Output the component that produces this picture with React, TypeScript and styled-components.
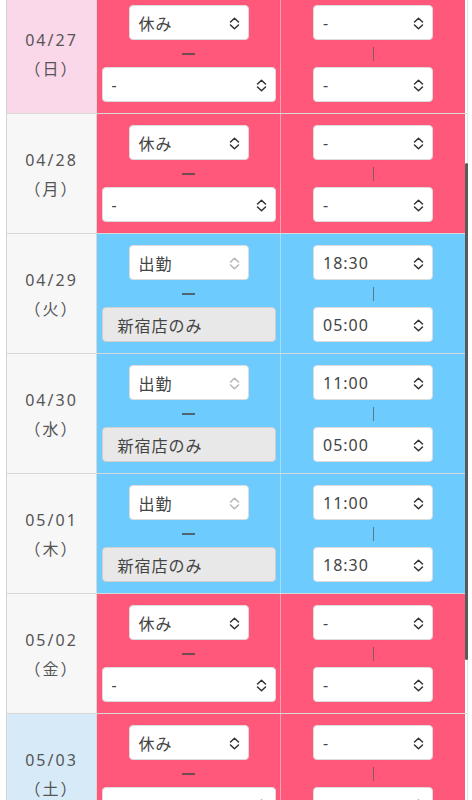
import styled, { createGlobalStyle } from "styled-components";

type Kind = "sun" | "sat" | "day";

interface Shift {
    date: string;
    dow: string;
    kind: Kind;
    work: boolean;
    start: string;
    end: string;
}

const shifts: Shift[] = [
    { date: "04/27", dow: "日", kind: "sun", work: false, start: "-", end: "-" },
    { date: "04/28", dow: "月", kind: "day", work: false, start: "-", end: "-" },
    { date: "04/29", dow: "火", kind: "day", work: true, start: "18:30", end: "05:00" },
    { date: "04/30", dow: "水", kind: "day", work: true, start: "11:00", end: "05:00" },
    { date: "05/01", dow: "木", kind: "day", work: true, start: "11:00", end: "18:30" },
    { date: "05/02", dow: "金", kind: "day", work: false, start: "-", end: "-" },
    { date: "05/03", dow: "土", kind: "sat", work: false, start: "-", end: "-" },
];

const GlobalStyle = createGlobalStyle`
    html, body {
        margin: 0;
        padding: 0;
        background: #fff;
        overflow: hidden;
    }
    body {
        font-family: "Noto Sans", "Noto Sans CJK JP", sans-serif;
    }
`;

const Page = styled.div`
    position: relative;
    height: 800px;
    overflow: hidden;
    padding-left: 6px;
`;

const Table = styled.div`
    width: 460px;
    margin-top: -6px;
    border-left: 1px solid #d4d4d4;
    border-right: 1px solid #e4e4e4;
`;

const Row = styled.div`
    display: grid;
    grid-template-columns: 90px 184px 184px;
    height: 119px;
    border-bottom: 1px solid #d8d8d8;
`;

const dateBg: Record<Kind, string> = {
    sun: "#fbd7ea",
    sat: "#d7eaf8",
    day: "#f7f7f7",
};

const DateCell = styled.div<{ $kind: Kind }>`
    background: ${(p) => dateBg[p.$kind]};
    border-right: 1px solid #d8d8d8;
    display: flex;
    flex-direction: column;
    align-items: center;
    justify-content: center;
    gap: 5px;
    padding-top: 2px;
    color: #555;
    font-size: 16px;
    letter-spacing: 2px;
    line-height: 24px;
`;

const Cell = styled.div<{ $work: boolean }>`
    background: ${(p) => (p.$work ? "#6dcbfd" : "#ff587b")};
    border-right: 1px solid ${(p) => (p.$work ? "#a9d9f3" : "#f2a3b4")};
    display: flex;
    flex-direction: column;
    align-items: center;
    justify-content: space-between;
    padding: 11px 5px;
    &:last-child {
        border-right: none;
    }
`;

const Select = styled.div<{ $wide?: boolean }>`
    position: relative;
    box-sizing: border-box;
    width: ${(p) => (p.$wide ? "174px" : "120px")};
    height: 35px;
    background: #fff;
    border: 1px solid #dcdcdc;
    border-radius: 4px;
    display: flex;
    align-items: center;
    padding: 0 9px;
    color: #444;
    font-size: 16px;
    letter-spacing: 1px;
`;

const Arrow = styled.svg<{ $muted?: boolean }>`
    position: absolute;
    right: 8px;
    top: 11px;
    width: 11px;
    height: 13px;
    stroke: ${(p) => (p.$muted ? "#b5b5b5" : "#333")};
`;

const StoreBox = styled.div`
    box-sizing: border-box;
    width: 174px;
    height: 35px;
    background: #e8e8e8;
    border: 1px solid #cfcfcf;
    border-radius: 4px;
    display: flex;
    align-items: center;
    padding-left: 15px;
    color: #444;
    font-size: 16px;
    letter-spacing: 1px;
`;

const Dash = styled.div`
    width: 13px;
    height: 2px;
    background: #444;
    opacity: 0.75;
`;

const Bar = styled.div`
    width: 1px;
    height: 14px;
    background: #555;
    opacity: 0.7;
`;

const ScrollThumb = styled.div`
    position: absolute;
    left: 465px;
    top: 163px;
    width: 3px;
    height: 497px;
    border-radius: 2px;
    background: #5a5a5a;
`;

function SelectBox(props: { value: string; wide?: boolean; disabled?: boolean }) {
    return (
        <Select $wide={props.wide}>
            {props.value}
            <Arrow $muted={props.disabled} viewBox="0 0 11 13" fill="none" strokeWidth="1.5" strokeLinecap="round" strokeLinejoin="round">
                <path d="M1.5 5 5.5 1.2 9.5 5" />
                <path d="M1.5 8 5.5 11.8 9.5 8" />
            </Arrow>
        </Select>
    );
}

export default function App() {
    return (
        <Page>
            <GlobalStyle />
            <Table>
                {shifts.map((s) => (
                    <Row key={s.date}>
                        <DateCell $kind={s.kind}>
                            <span>{s.date}</span>
                            <span>（{s.dow}）</span>
                        </DateCell>
                        <Cell $work={s.work}>
                            <SelectBox value={s.work ? "出勤" : "休み"} disabled={s.work} />
                            <Dash />
                            {s.work ? <StoreBox>新宿店のみ</StoreBox> : <SelectBox value="-" wide />}
                        </Cell>
                        <Cell $work={s.work}>
                            <SelectBox value={s.start} />
                            <Bar />
                            <SelectBox value={s.end} />
                        </Cell>
                    </Row>
                ))}
            </Table>
            <ScrollThumb />
        </Page>
    );
}
